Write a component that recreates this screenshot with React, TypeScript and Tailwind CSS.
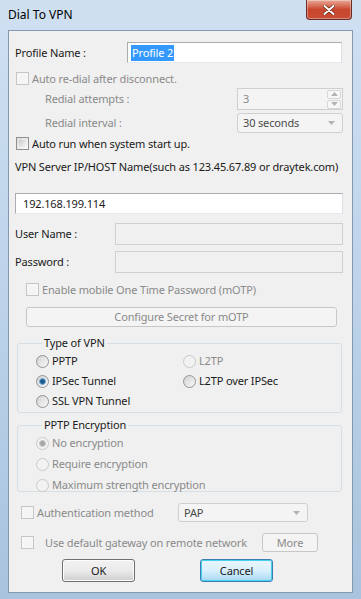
import React from 'react'

function Check({ disabled }: { disabled?: boolean }) {
  return (
    <div
      className={
        'w-[13px] h-[13px] shrink-0 border ' +
        (disabled
          ? 'border-[#c6c6c6] bg-[#f6f6f6]'
          : 'border-[#8e8f8f] bg-gradient-to-br from-[#dcdcdc] to-[#fbfbfb]')
      }
    >
      <div className={'m-[2px] w-[7px] h-[7px] ' + (disabled ? 'bg-[#f4f4f4]' : 'bg-gradient-to-br from-[#cbcbcb] to-[#f6f6f6]')} />
    </div>
  )
}

function Radio({ checked, disabled, label, className = '' }: { checked?: boolean; disabled?: boolean; label: string; className?: string }) {
  return (
    <div className={'flex items-center gap-[3px] h-[16px] ' + className}>
      <div
        className={
          'w-[13px] h-[13px] shrink-0 rounded-full border flex items-center justify-center ' +
          (disabled ? 'border-[#c9c9c9] bg-[#f2f2f2]' : 'border-[#939393] bg-gradient-to-br from-[#d2d2d2] to-[#fafafa]')
        }
      >
        {checked && (
          <div
            className={
              'w-[7px] h-[7px] rounded-full ' +
              (disabled ? 'bg-[#a6a6a6] border border-[#c9c9c9]' : 'bg-[#1c5c92] border border-[#7fb0d9]')
            }
          />
        )}
      </div>
      <span className={disabled ? 'text-[#8a8a8a]' : 'text-[#1a1a1a]'}>{label}</span>
    </div>
  )
}

function Arrow({ up }: { up?: boolean }) {
  return (
    <svg width="7" height="4" viewBox="0 0 7 4">
      <path d={up ? 'M0 4 L3.5 0 L7 4 Z' : 'M0 0 L7 0 L3.5 4 Z'} fill="#b3b3b3" />
    </svg>
  )
}

function Combo({ text, className = '' }: { text: string; className?: string }) {
  return (
    <div className={'flex items-center justify-between rounded-[3px] border border-[#cfcfcf] bg-[#f4f4f4] pl-[5px] pr-[7px] ' + className}>
      <span className="text-[#4a4a4a]">{text}</span>
      <Arrow />
    </div>
  )
}

export default function App() {
  return (
    <div className="w-[361px] h-[599px] overflow-hidden relative bg-gradient-to-b from-[#cfe0f1] via-[#bcd3ea] to-[#a9c3de] font-['Noto_Sans',sans-serif] text-[11px] tracking-[-0.15px] leading-[16px] text-[#1a1a1a]">
      {/* title bar */}
      <div className="h-[30px] flex items-start justify-between">
        <div className="pl-[8px] pt-[7px] text-black text-[12px] tracking-normal">Dial To VPN</div>
        <div className="mr-[9px] w-[46px] h-[20px] rounded-b-[4px] border border-t-0 border-[#6b2b22] bg-gradient-to-b from-[#e8a796] via-[#c9462c] to-[#c74d35] flex items-center justify-center shadow-[inset_0_0_0_1px_rgba(255,255,255,0.35)]">
          <svg width="12" height="10" viewBox="0 0 12 10">
            <path d="M1.5 1 L10.5 9 M10.5 1 L1.5 9" stroke="#5a1d12" strokeWidth="3.2" strokeLinecap="round" />
            <path d="M1.5 1 L10.5 9 M10.5 1 L1.5 9" stroke="#ffffff" strokeWidth="2" strokeLinecap="round" />
          </svg>
        </div>
      </div>

      {/* client area */}
      <div className="ml-[8px] w-[345px] h-[563px] border border-[#8499ae] bg-[#f0f0f0] flex flex-col">
        {/* profile name */}
        <div className="mt-[11px] h-[21px] flex items-center pl-[6px]">
          <span className="w-[112px]">Profile Name :</span>
          <div className="w-[215px] h-[21px] border border-[#abadb3] border-b-[#e3e9ef] border-r-[#dbdfe6] bg-white flex items-center pl-[3px]">
            <span className="bg-[#3399ff] text-white px-px">Profile 2</span>
          </div>
        </div>

        {/* auto redial */}
        <div className="mt-[9px] h-[13px] flex items-center pl-[7px] gap-[3px]">
          <Check disabled />
          <span className="text-[#8a8a8a]">Auto re-dial after disconnect.</span>
        </div>

        <div className="mt-[3px] h-[22px] flex items-center pl-[36px] text-[#8a8a8a]">
          <span className="w-[192px]">Redial attempts :</span>
          <div className="w-[106px] h-[22px] border border-[#cfcfcf] bg-[#f4f4f4] flex items-center justify-between pl-[5px] pr-[1px]">
            <span>3</span>
            <div className="flex flex-col gap-px">
              <div className="w-[14px] h-[9px] border border-[#d6d6d6] rounded-[2px] bg-[#f7f7f7] flex items-center justify-center">
                <Arrow up />
              </div>
              <div className="w-[14px] h-[9px] border border-[#d6d6d6] rounded-[2px] bg-[#f7f7f7] flex items-center justify-center">
                <Arrow />
              </div>
            </div>
          </div>
        </div>

        <div className="mt-[3px] h-[20px] flex items-center pl-[36px] text-[#8a8a8a]">
          <span className="w-[192px]">Redial interval :</span>
          <Combo text="30 seconds" className="w-[106px] h-[20px]" />
        </div>

        {/* auto run */}
        <div className="mt-[4px] h-[13px] flex items-center pl-[7px] gap-[3px]">
          <Check />
          <span>Auto run when system start up.</span>
        </div>

        <div className="mt-[9px] h-[16px] pl-[6px] whitespace-nowrap">VPN Server IP/HOST Name(such as 123.45.67.89 or draytek.com)</div>

        <div className="mt-[18px] ml-[6px] w-[328px] h-[21px] border border-[#abadb3] border-b-[#e3e9ef] border-r-[#dbdfe6] bg-white flex items-center pl-[7px]">
          192.168.199.114
        </div>

        <div className="mt-[9px] h-[22px] flex items-center pl-[6px]">
          <span className="w-[100px]">User Name :</span>
          <div className="w-[228px] h-[22px] border border-[#cfcfcf] bg-[#f0f0f0]" />
        </div>
        <div className="mt-[6px] h-[22px] flex items-center pl-[6px]">
          <span className="w-[100px]">Password :</span>
          <div className="w-[228px] h-[22px] border border-[#cfcfcf] bg-[#f0f0f0]" />
        </div>

        {/* mOTP */}
        <div className="mt-[10px] h-[13px] flex items-center pl-[17px] gap-[3px]">
          <Check disabled />
          <span className="text-[#8a8a8a]">Enable mobile One Time Password (mOTP)</span>
        </div>
        <div className="mt-[11px] ml-[17px] w-[311px] h-[20px] rounded-[3px] border border-[#c7c7c7] bg-[#f4f4f4] flex items-center justify-center text-[#8a8a8a]">
          Configure Secret for mOTP
        </div>

        {/* type of VPN */}
        <fieldset className="mt-[8px] ml-[8px] w-[325px] h-[78px] border border-[#d5dfe5] rounded-[3px] px-[18px] pb-[6px] pt-[2px]">
          <legend className="ml-[6px] px-[2px] h-[16px] leading-[16px]">Type of VPN</legend>
          <div className="grid grid-cols-[147px_1fr] gap-y-[4px]">
            <Radio label="PPTP" />
            <Radio label="L2TP" disabled />
            <Radio label="IPSec Tunnel" checked />
            <Radio label="L2TP over IPSec" />
            <Radio label="SSL VPN Tunnel" />
          </div>
        </fieldset>

        {/* PPTP encryption */}
        <fieldset className="mt-[4px] ml-[8px] w-[325px] h-[75px] border border-[#d5dfe5] rounded-[3px] px-[18px] pt-[2px]">
          <legend className="ml-[6px] px-[2px] h-[16px] leading-[16px]">PPTP Encryption</legend>
          <div className="flex flex-col gap-[5px]">
            <Radio label="No encryption" checked disabled />
            <Radio label="Require encryption" disabled />
            <Radio label="Maximum strength encryption" disabled />
          </div>
        </fieldset>

        {/* authentication */}
        <div className="mt-[11px] h-[19px] flex items-center pl-[12px]">
          <Check disabled />
          <span className="ml-[3px] w-[141px] text-[#8a8a8a]">Authentication method</span>
          <Combo text="PAP" className="w-[130px] h-[19px]" />
        </div>

        <div className="mt-[11px] h-[19px] flex items-center pl-[12px]">
          <Check disabled />
          <span className="ml-[11px] w-[217px] whitespace-nowrap text-[#8a8a8a]">Use default gateway on remote network</span>
          <div className="w-[56px] h-[19px] rounded-[3px] border border-[#c7c7c7] bg-[#f4f4f4] flex items-center justify-center text-[#8a8a8a]">
            More
          </div>
        </div>

        {/* buttons */}
        <div className="mt-[7px] h-[23px] flex pl-[53px] gap-[65px]">
          <div className="w-[73px] h-[23px] rounded-[3px] border border-[#707070] bg-gradient-to-b from-[#f2f2f2] via-[#ebebeb] to-[#cfcfcf] flex items-center justify-center shadow-[inset_0_0_0_1px_#fcfcfc]">
            OK
          </div>
          <div className="w-[73px] h-[23px] rounded-[3px] border border-[#3c7fb1] bg-gradient-to-b from-[#eaf6fd] via-[#d9f0fc] to-[#a7d9f5] flex items-center justify-center shadow-[inset_0_0_0_1px_#48d0f0]">
            Cancel
          </div>
        </div>
      </div>
    </div>
  )
}
